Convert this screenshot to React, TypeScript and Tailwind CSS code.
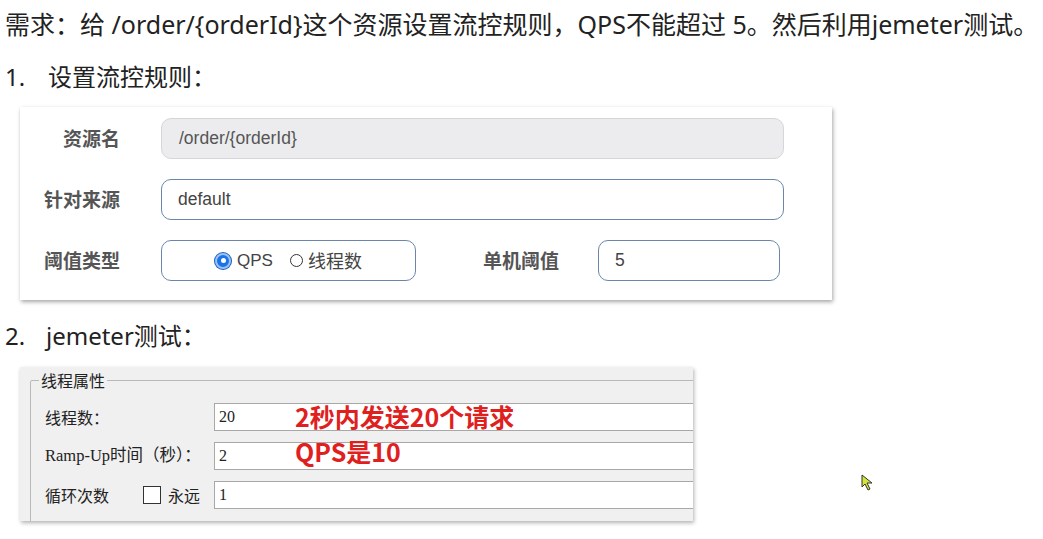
export default function App() {
  return (
    <div className="w-[1043px] h-[539px] bg-white overflow-hidden relative text-[#222]" style={{ fontFamily: '"Noto Sans", "Noto Sans CJK SC", sans-serif' }}>
      {/* Intro line */}
      <p className="pl-[5px] pt-[6px] text-[25px] leading-[36px] whitespace-nowrap">
        需求：给 /order/{'{'}orderId{'}'}这个资源设置流控规则，QPS不能超过 5。然后利用jemeter测试。
      </p>

      {/* Step 1 */}
      <p className="pl-[5px] mt-[17px] text-[24px] leading-[36px] flex">
        <span className="w-[43px]">1.</span>
        <span>设置流控规则：</span>
      </p>

      <div className="ml-[20px] mt-[12px] w-[812px] h-[193px] bg-white shadow-[1px_2px_4px_rgba(0,0,0,0.35)] pt-[11px] flex flex-col gap-[20px]" style={{ fontFamily: '"Liberation Sans", "Noto Sans CJK SC", sans-serif' }}>
        <div className="flex items-center h-[41px]">
          <label className="w-[100px] text-right font-bold text-[19px] text-[#555]" style={{ fontFamily: '"Noto Sans CJK SC", sans-serif' }}>资源名</label>
          <div className="ml-[41px] w-[623px] h-[41px] rounded-[10px] bg-[#ececee] border border-[#d6d6d6] flex items-center pl-[17px] text-[17.5px] text-[#555]">
            /order/{'{'}orderId{'}'}
          </div>
        </div>
        <div className="flex items-center h-[41px]">
          <label className="w-[100px] text-right font-bold text-[19px] text-[#555]" style={{ fontFamily: '"Noto Sans CJK SC", sans-serif' }}>针对来源</label>
          <div className="ml-[41px] w-[623px] h-[41px] rounded-[10px] bg-white border border-[#6b86ad] flex items-center pl-[16px] text-[17.5px] text-[#444]">
            default
          </div>
        </div>
        <div className="flex items-center h-[41px]">
          <label className="w-[100px] text-right font-bold text-[19px] text-[#555]" style={{ fontFamily: '"Noto Sans CJK SC", sans-serif' }}>阈值类型</label>
          <div className="ml-[41px] w-[255px] h-[41px] rounded-[10px] bg-white border border-[#6b86ad] flex items-center justify-center text-[17px] text-[#444]">
            <span className="w-[16px] h-[16px] rounded-full bg-[#1a73e8] border-2 border-[#9cc2f5] ring-1 ring-[#1a5fc0] flex items-center justify-center">
              <span className="w-[5px] h-[5px] rounded-full bg-white" />
            </span>
            <span className="ml-[6px]">QPS</span>
            <span className="ml-[17px] w-[13px] h-[13px] rounded-full border border-[#333] bg-white" />
            <span className="ml-[5px] text-[18px]" style={{ fontFamily: '"Noto Sans CJK SC", sans-serif' }}>线程数</span>
          </div>
          <label className="ml-[67px] font-bold text-[19px] text-[#555]" style={{ fontFamily: '"Noto Sans CJK SC", sans-serif' }}>单机阈值</label>
          <div className="ml-[39px] w-[182px] h-[41px] rounded-[10px] bg-white border border-[#6b86ad] flex items-center pl-[16px] text-[17.5px] text-[#444]">
            5
          </div>
        </div>
      </div>

      {/* Step 2 */}
      <p className="pl-[5px] mt-[18px] text-[24px] leading-[36px] flex">
        <span className="w-[41px]">2.</span>
        <span>jemeter测试：</span>
      </p>

      <div className="ml-[20px] mt-[13px] w-[673px] h-[154px] bg-[#f0f0f0] shadow-[1px_2px_4px_rgba(0,0,0,0.3)] overflow-hidden pl-[10px] pt-[13px]" style={{ fontFamily: '"Liberation Serif", "Noto Sans CJK SC", serif' }}>
        <div className="relative w-[700px] h-[160px] border border-[#b9b9b9] rounded-[2px] pl-[14px] pt-[22px] flex flex-col gap-[11px] text-[16.5px] text-[#222]">
          <span className="absolute left-[8px] top-[-11px] bg-[#f0f0f0] px-[2px] text-[16px] leading-[20px]" style={{ fontFamily: '"Noto Sans CJK SC", sans-serif' }}>线程属性</span>
          <div className="flex items-center h-[28px]">
            <span className="w-[169px] text-[16px]" style={{ fontFamily: '"Noto Sans CJK SC", sans-serif' }}>线程数：</span>
            <div className="relative w-[500px] h-[28px] bg-white border border-[#a8a8a8] flex items-center pl-[4px] text-[16px]">
              20
              <span className="absolute left-[80px] top-[-3px] text-[25px] leading-[30px] font-bold text-[#e0201e] whitespace-nowrap" style={{ fontFamily: '"Noto Sans CJK SC", sans-serif' }}>2秒内发送20个请求</span>
            </div>
          </div>
          <div className="flex items-center h-[28px]">
            <span className="w-[169px] whitespace-nowrap">Ramp-Up时间（秒）：</span>
            <div className="relative w-[500px] h-[28px] bg-white border border-[#a8a8a8] flex items-center pl-[4px] text-[16px]">
              2
              <span className="absolute left-[80px] top-[-7px] text-[25px] leading-[30px] font-bold text-[#e0201e] whitespace-nowrap" style={{ fontFamily: '"Noto Sans CJK SC", sans-serif' }}>QPS是10</span>
            </div>
          </div>
          <div className="flex items-center h-[28px]">
            <span className="w-[98px] text-[16px]" style={{ fontFamily: '"Noto Sans CJK SC", sans-serif' }}>循环次数</span>
            <span className="w-[18px] h-[18px] border border-[#333] bg-white" />
            <span className="ml-[7px] w-[46px] text-[16px]" style={{ fontFamily: '"Noto Sans CJK SC", sans-serif' }}>永远</span>
            <div className="w-[500px] h-[28px] bg-white border border-[#a8a8a8] flex items-center pl-[4px] text-[16px]">1</div>
          </div>
        </div>
      </div>

      {/* Cursor */}
      <svg className="absolute left-[861px] top-[474px]" width="14" height="18" viewBox="0 0 14 18">
        <path d="M1 1 L1 13 L4 10 L7 16 L9 15 L6 9 L11 9 Z" fill="#d6e33a" stroke="#333" strokeWidth="1" strokeLinejoin="round" />
      </svg>
    </div>
  );
}
